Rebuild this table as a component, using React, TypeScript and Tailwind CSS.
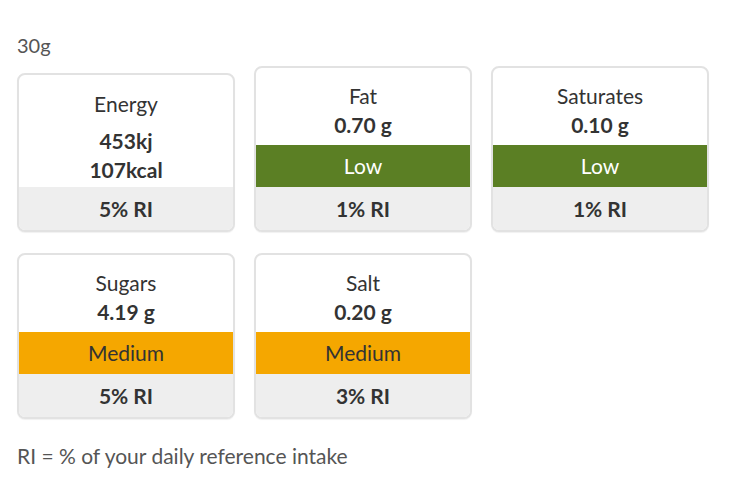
const nutrients = [
  { name: "Fat", value: "0.70 g", level: "Low", ri: "1% RI" },
  { name: "Saturates", value: "0.10 g", level: "Low", ri: "1% RI" },
  { name: "Sugars", value: "4.19 g", level: "Medium", ri: "5% RI" },
  { name: "Salt", value: "0.20 g", level: "Medium", ri: "3% RI" },
];

const Card = ({ children, ri }: { children: React.ReactNode; ri: string }) => (
  <div className="w-[218px] rounded-[8px] border-2 border-[#e2e2e2] bg-white overflow-hidden shadow-[0_1px_1px_rgba(0,0,0,0.06)]">
    {children}
    <div className="h-[43px] bg-[#eeeeee] flex items-center justify-center text-[21px] font-bold text-[#333]">
      {ri}
    </div>
  </div>
);

const App = () => {
  return (
    <div className="min-h-[501px] bg-white pl-[17px] pt-[30px] text-[#333] font-['Lato','Open_Sans',sans-serif]">
      <div className="text-[20px] leading-[30px] text-[#555]">30g</div>

      <div className="mt-[6px] flex flex-wrap items-end gap-x-[19px] gap-y-[21px] w-[720px]">
        <Card ri="5% RI">
          <div className="pt-[14px] pb-[3px] text-center">
            <div className="text-[21px] leading-[29px]">Energy</div>
            <div className="mt-[8px] text-[21px] leading-[29px] font-bold">453kj</div>
            <div className="text-[21px] leading-[29px] font-bold">107kcal</div>
          </div>
        </Card>

        {nutrients.map((n) => (
          <Card key={n.name} ri={n.ri}>
            <div className="pt-[13px] pb-[6px] text-center">
              <div className="text-[21px] leading-[29px]">{n.name}</div>
              <div className="text-[21px] leading-[29px] font-bold">{n.value}</div>
            </div>
            <div
              className={
                n.level === "Low"
                  ? "h-[42px] bg-[#5b7f24] text-white flex items-center justify-center text-[21px]"
                  : "h-[42px] bg-[#f5a700] text-[#333] flex items-center justify-center text-[21px]"
              }
            >
              {n.level}
            </div>
          </Card>
        ))}
      </div>

      <div className="mt-[22px] text-[21px] leading-[30px] text-[#555]">
        RI = % of your daily reference intake
      </div>
    </div>
  );
};

export default App;
